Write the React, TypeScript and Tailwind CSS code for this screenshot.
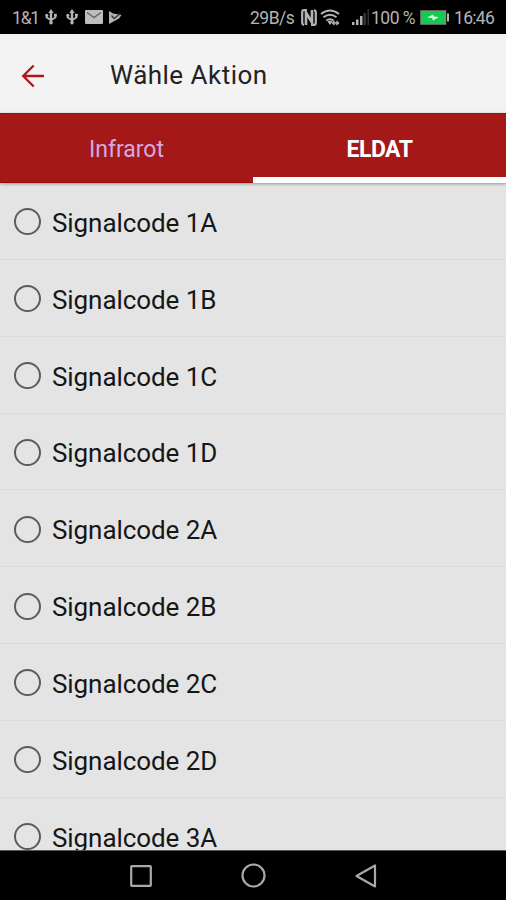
import React from "react";

const signals = ["1A", "1B", "1C", "1D", "2A", "2B", "2C", "2D", "3A"];

const UsbIcon = () => (
  <svg width="12" height="16" viewBox="0 0 12 16" fill="#b4b4b4" stroke="#b4b4b4">
    <path d="M6 3v10" strokeWidth="2.4" />
    <path d="M6 0l2.7 4H3.3z" stroke="none" />
    <path d="M1.7 6v2.5L6 11l4.3-2.5V6" fill="none" strokeWidth="2" />
    <circle cx="1.8" cy="6.2" r="1.5" stroke="none" />
    <path d="M9 4.8h2.8v2.8H9z" stroke="none" />
    <circle cx="6" cy="13.8" r="1.8" stroke="none" />
  </svg>
);

const StatusBar = () => (
  <div className="flex h-[34px] shrink-0 items-center bg-black pl-3 text-[17.5px] leading-none text-[#b4b4b4]">
    <span className="w-[33px] whitespace-nowrap pt-[3px] tracking-[-1.2px]">1&amp;1</span>
    <UsbIcon />
    <div className="ml-[9px]">
      <UsbIcon />
    </div>
    <svg className="ml-[7px]" width="18" height="14" viewBox="0 0 18 14">
      <rect width="18" height="14" rx="1" fill="#bdbdbd" />
      <path d="M2 2.5l7 5 7-5" fill="none" stroke="#666" strokeWidth="1.5" />
    </svg>
    <svg className="ml-[5px]" width="14" height="15" viewBox="0 0 14 15">
      <path d="M1 1l4 2.5L13.5 5 11 8.5 1 14z" fill="#b4b4b4" />
      <path d="M3.5 5.5l2.5 3 6.5-5" fill="none" stroke="#333" strokeWidth="1.3" />
    </svg>
    <span className="ml-[128px] w-[51px] whitespace-nowrap pt-[3px] tracking-[-0.5px]">29B/s</span>
    <svg width="16" height="17" viewBox="0 0 16 17" fill="none">
      <path d="M6 1.2H3q-1.800 0-1.800 1.800v11q0 1.500 1.800 1.800M10 15.800h3q1.800 0 1.800-1.800V3q0-1.500-1.800-1.800" stroke="#b4b4b4" strokeWidth="2.2" />
      <path d="M5 16V3.500l6 10V1" stroke="#b4b4b4" strokeWidth="2.6" />
    </svg>
    <svg className="ml-[3px]" width="21" height="17" viewBox="0 0 21 17" fill="none" stroke="#b4b4b4" strokeWidth="2">
      <path d="M1 5q9-7 18 0M3.5 8.3q6.5-5 13 0M6.3 11.5q3.7-2.6 7.4 0" />
      <path d="M7.5 12.5q2.5-1.5 5 0L10 16z" fill="#b4b4b4" stroke="none" />
      <path d="M12.5 14h6.500M14.5 12l-2 2 2 2M16.500 12l2 2-2 2" strokeWidth="1.3" />
    </svg>
    <svg className="ml-[11px]" width="18" height="16" viewBox="0 0 18 16" fill="#b4b4b4">
      <path d="M0 13h2.5v3H0zM4 10.5h2.5V16H4zM8 7h2.5v9H8z" />
      <path d="M11.5 4H14v12h-2.5zM15.5 0H17v16h-1.5z" fill="#333" />
    </svg>
    <span className="ml-px w-[49px] whitespace-nowrap pt-[3px] tracking-[-0.5px]">100 %</span>
    <svg width="29" height="15" viewBox="0 0 29 15">
      <rect x="1" y="1" width="24.5" height="13" fill="#14c94d" stroke="#858585" strokeWidth="1.5" />
      <path d="M27 3.5h2v8h-2z" fill="#b4b4b4" />
      <path d="M7 7.500l6-3 1 2 5 .5-6 3.500-1-2.500z" fill="#d4ffdc" />
    </svg>
    <span className="ml-[5px] whitespace-nowrap pt-[3px] tracking-[-0.7px]">16:46</span>
  </div>
);

const Header = () => (
  <header className="flex h-[79px] shrink-0 items-center bg-[#f3f3f3]">
    <svg
      className="ml-[21px] mt-[4px]"
      width="24"
      height="24"
      viewBox="0 0 24 24"
      fill="none"
      stroke="#b01818"
      strokeWidth="2.3"
    >
      <path d="M23 12H2.5M12.7 1.5L2.2 12l10.5 10.5" />
    </svg>
    <h1 className="ml-[65px] mt-[3px] whitespace-nowrap text-[26px] leading-none tracking-[0.48px] text-[#222]">
      Wähle Aktion
    </h1>
  </header>
);

const Tabs = () => (
  <div className="z-10 grid h-[70px] shrink-0 grid-cols-2 border-t border-[#980f0f] bg-[#a51818] text-center text-[23px] leading-none shadow-[0_1px_3px_rgba(0,0,0,0.35)]">
    <div className="border-b border-[#980909] pt-[24px] text-[#cfabe5]">
      Infrarot
    </div>
    <div className="border-b-[6px] border-white pt-[24px] font-bold tracking-[-0.5px] text-white">
      ELDAT
    </div>
  </div>
);

const NavBar = () => (
  <nav className="flex h-[50px] shrink-0 items-center border-t border-[#555] bg-black">
    <svg className="ml-[130px]" width="22" height="22" viewBox="0 0 22 22" fill="none" stroke="#a8a8a8" strokeWidth="2.2">
      <rect x="1.2" y="1.2" width="19.6" height="19.6" rx="0.5" />
    </svg>
    <svg className="ml-[89px]" width="25" height="25" viewBox="0 0 25 25" fill="none" stroke="#a8a8a8" strokeWidth="2.2">
      <circle cx="12.5" cy="12.5" r="11" />
    </svg>
    <svg
      className="ml-[89px]"
      width="22"
      height="24"
      viewBox="0 0 22 24"
      fill="none"
      stroke="#a8a8a8"
      strokeWidth="2.2"
      strokeLinejoin="round"
    >
      <path d="M20 1.5v21L1.5 12z" />
    </svg>
  </nav>
);

const App = () => {
  return (
    <div className="flex h-[900px] w-[506px] flex-col overflow-hidden bg-[#e4e4e4] font-['Roboto',sans-serif]">
      <StatusBar />
      <Header />
      <Tabs />
      <ul className="min-h-0 flex-1 overflow-hidden">
        {signals.map((code) => (
          <li key={code} className="flex h-[76.85px] items-center border-b border-[#dadada] pl-[14px]">
            <span className="mt-[2px] size-[27px] rounded-full border-2 border-[#5c5c5c]" />
            <span className="ml-[11px] mt-[4px] whitespace-nowrap text-[26px] leading-none tracking-[-0.08px] text-[#161616]">
              Signalcode {code}
            </span>
          </li>
        ))}
      </ul>
      <NavBar />
    </div>
  );
};

export default App;
